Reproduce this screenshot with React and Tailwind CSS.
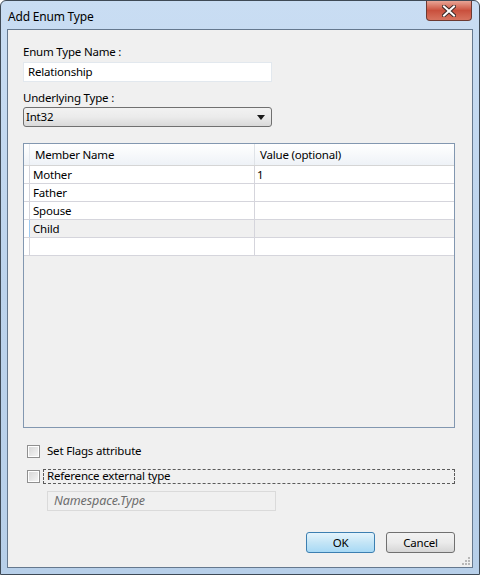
import React from 'react';

const font = { fontFamily: '"Noto Sans", "Open Sans", "Liberation Sans", sans-serif' };

const rows = [
  { name: 'Mother', value: '1' },
  { name: 'Father', value: '' },
  { name: 'Spouse', value: '' },
  { name: 'Child', value: '', current: true },
  { name: '', value: '' },
];

function Checkbox() {
  return (
    <span className="flex h-[13px] w-[13px] shrink-0 items-center justify-center border border-[#8f8f8f] bg-white">
      <span className="h-[9px] w-[9px] bg-gradient-to-br from-[#d8d8d8] to-[#f4f4f4]" />
    </span>
  );
}

function CloseButton() {
  return (
    <div className="absolute right-[7px] top-0 flex h-[20px] w-[46px] items-center justify-center rounded-b-[4px] border border-t-0 border-[#6d3a32] bg-gradient-to-b from-[#e7a496] via-[#c9503d] to-[#d7735f]">
      <svg width="14" height="12" viewBox="0 0 14 12">
        <path d="M2 1.5 L12 10.5 M12 1.5 L2 10.5" stroke="#3c2a28" strokeWidth="4" strokeLinecap="square" />
        <path d="M2 1.5 L12 10.5 M12 1.5 L2 10.5" stroke="#ffffff" strokeWidth="2" strokeLinecap="square" />
      </svg>
    </div>
  );
}

export default function App() {
  return (
    <div
      className="relative flex h-[575px] w-[480px] flex-col rounded-t-[6px] border border-[#3f4a56] bg-gradient-to-b from-[#c9ddf3] via-[#bcd3ec] to-[#b7cfe9] text-[11.5px] tracking-[-0.2px] text-black"
      style={font}
    >
      <div className="flex h-[28px] shrink-0 items-center pl-[7px] pt-[3px] text-[12px]">Add Enum Type</div>
      <CloseButton />

      <div className="mx-[6px] mb-[6px] flex flex-1 flex-col border border-[#65788e] bg-[#f0f0f0] pl-[15px] pr-[17px]">
        <div className="mt-[14px] h-[16px] leading-[16px]">Enum Type Name :</div>
        <div className="mt-[2px] flex h-[20px] w-[249px] items-center border border-[#e2e8ee] bg-white pl-[4px]">Relationship</div>

        <div className="mt-[8px] h-[16px] leading-[16px]">Underlying Type :</div>
        <div className="mt-[1px] flex h-[20px] w-[249px] items-center justify-between rounded-[3px] border border-[#707070] bg-gradient-to-b from-[#f2f2f2] via-[#ebebeb] to-[#d9d9d9] pl-[2px] pr-[6px]">
          <span>Int32</span>
          <svg width="8" height="5" viewBox="0 0 8 5">
            <path d="M0 0 H8 L4 5 Z" fill="#1a1a1a" />
          </svg>
        </div>

        <div className="mt-[16px] flex h-[285px] flex-col border border-[#8297b0] bg-[#f0f0f0]">
          <div className="flex h-[22px] shrink-0 border-b border-[#d5d5d5] bg-gradient-to-b from-white via-[#f7f9fb] to-[#eef2f7]">
            <div className="w-[6px] border-r border-[#e4e8ee]" />
            <div className="flex w-[225px] items-center border-r border-[#dfe3e8] pl-[5px] pt-[1px]">Member Name</div>
            <div className="flex flex-1 items-center pl-[5px] pt-[1px]">Value (optional)</div>
          </div>
          {rows.map((row, i) => (
            <div key={i} className={`flex h-[18px] shrink-0 border-b border-[#d5d5dc] ${row.current ? 'bg-[#f0f0f0]' : 'bg-white'}`}>
              <div className={`w-[6px] border-r ${row.current ? 'border-[#9fcaf0]' : 'border-[#d5d5dc]'} bg-white`} />
              <div className="flex w-[225px] items-center border-r border-[#d5d5dc] pl-[3px] pt-[1px]">{row.name}</div>
              <div className="flex flex-1 items-center pl-[2px] pt-[1px]">{row.value}</div>
            </div>
          ))}
        </div>

        <div className="mt-[15px] flex h-[16px] items-center pl-[4px]">
          <Checkbox />
          <span className="ml-[7px] leading-[16px]">Set Flags attribute</span>
        </div>
        <div className="mt-[9px] flex h-[16px] items-center pl-[4px]">
          <Checkbox />
          <span className="ml-[3px] flex h-[15px] flex-1 items-center border border-dashed border-[#5a5a5a] pl-[3px] leading-[14px]">Reference external type</span>
        </div>
        <div className="ml-[24px] mt-[7px] flex h-[20px] w-[229px] items-center border border-[#dadada] bg-[#f0f0f0] pl-[6px] text-[12.5px] italic tracking-[-0.1px] text-[#6d6d6d]">Namespace.Type</div>

        <div className="mt-[21px] flex justify-end gap-[11px]">
          <div className="flex h-[21px] w-[69px] items-center justify-center rounded-[3px] border border-[#3c7fb1] bg-gradient-to-b from-[#e5f4fc] via-[#c4e5f6] to-[#a7d9f5]">OK</div>
          <div className="flex h-[21px] w-[69px] items-center justify-center rounded-[3px] border border-[#707070] bg-gradient-to-b from-[#f2f2f2] via-[#ebebeb] to-[#d6d6d6]">Cancel</div>
        </div>
      </div>

      <svg className="absolute bottom-[9px] right-[9px]" width="10" height="10" viewBox="0 0 10 10">
        {[[8, 0], [8, 3], [5, 3], [8, 6], [5, 6], [2, 6]].map(([x, y], i) => (
          <rect key={i} x={x} y={y + 2} width="2" height="2" fill="#b8b8b8" />
        ))}
      </svg>
    </div>
  );
}
